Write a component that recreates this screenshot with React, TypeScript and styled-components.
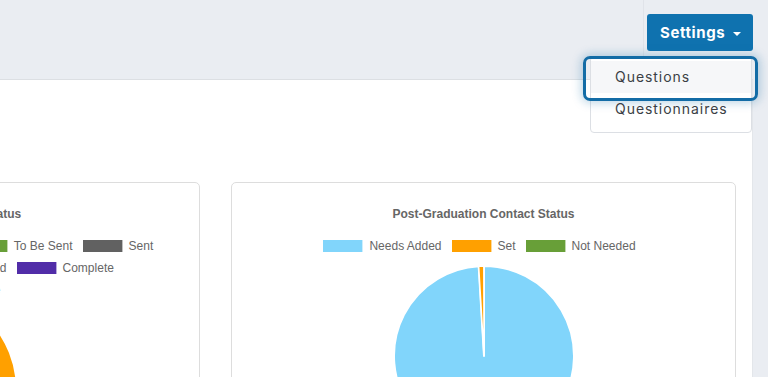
import React from "react";
import styled, { createGlobalStyle } from "styled-components";

const Global = createGlobalStyle`
  html, body { margin: 0; padding: 0; }
  body {
    background: #eaedf2;
    font-family: "Inter", "Open Sans", sans-serif;
    overflow: hidden;
    width: 768px;
    height: 377px;
  }
`;

const Page = styled.div`
  width: 768px;
  height: 377px;
  overflow: hidden;
  display: flex;
  flex-direction: column;
`;

const Header = styled.header`
  height: 79px;
  flex: none;
  display: flex;
  justify-content: flex-end;
  padding-right: 15px;
`;

const NavZone = styled.div`
  position: relative;
  border-left: 1px solid #e0e3e9;
  height: 76px;
  padding-left: 3px;
  padding-top: 14px;
  box-sizing: border-box;
`;

const SettingsButton = styled.button`
  height: 37px;
  width: 106px;
  border: none;
  border-radius: 3px;
  background: #0f72af;
  color: #fff;
  font-family: "Inter", sans-serif;
  font-weight: 700;
  font-size: 15px;
  letter-spacing: 0.6px;
  display: flex;
  align-items: center;
  padding: 0 12px 0 13px;
  gap: 8px;
  cursor: pointer;
`;

const Caret = styled.span`
  width: 0;
  height: 0;
  border-left: 4px solid transparent;
  border-right: 4px solid transparent;
  border-top: 4px solid #fff;
  margin-top: 2px;
`;

const Menu = styled.ul`
  position: absolute;
  top: 56px;
  right: 1px;
  width: 162px;
  box-sizing: border-box;
  margin: 0;
  padding: 4px 0 7px;
  list-style: none;
  background: #fff;
  border: 1px solid #dcdfe4;
  border-radius: 4px;
  z-index: 5;
`;

const MenuItem = styled.li<{ $focused?: boolean }>`
  position: relative;
  height: 32px;
  line-height: 32px;
  padding-left: 24px;
  font-family: "Inter", sans-serif;
  font-size: 14px;
  letter-spacing: 0.95px;
  color: #3b3f45;
  background: ${(p) => (p.$focused ? "#f6f7f9" : "transparent")};
  ${(p) =>
    p.$focused &&
    `
    &::after {
      content: "";
      position: absolute;
      top: -5px;
      bottom: -8px;
      left: -8px;
      right: -7px;
      border: 3px solid #136ca6;
      border-radius: 7px;
      box-shadow: 0 0 10px 2px rgba(19, 108, 166, 0.28);
      pointer-events: none;
    }
  `}
`;

const Panel = styled.main`
  flex: 1;
  background: #fff;
  border-top: 1px solid #dcdfe3;
  border-right: 1px solid #e3e6ea;
  width: 753px;
  box-sizing: border-box;
  padding: 102px 16px 0 16px;
  display: flex;
  gap: 31px;
`;

const Card = styled.section<{ $offset?: number }>`
  flex: none;
  width: 505px;
  height: 260px;
  box-sizing: border-box;
  border: 1px solid #dddddd;
  border-radius: 5px;
  margin-left: ${(p) => (p.$offset ? `${p.$offset}px` : "0")};
  padding-top: 24px;
  overflow: hidden;
  font-family: "Liberation Sans", Arial, sans-serif;
`;

const ChartTitle = styled.div`
  text-align: center;
  font-weight: 700;
  font-size: 12px;
  line-height: 14px;
  color: #666;
`;

const Legend = styled.div`
  margin-top: 19px;
  display: flex;
  flex-direction: column;
  gap: 10px;
`;

const LegendRow = styled.div`
  display: flex;
  justify-content: center;
  gap: 10px;
  height: 12px;
  padding-right: 8px;
`;

const LegendItem = styled.div`
  display: flex;
  align-items: center;
  gap: 6px;
  font-size: 12px;
  line-height: 12px;
  color: #666;
  white-space: nowrap;
`;

const Swatch = styled.span<{ $c: string }>`
  width: 40px;
  height: 12px;
  box-sizing: border-box;
  background: ${(p) => p.$c};
  border-right: 1px solid rgba(255, 255, 255, 0.6);
`;

const PieSvg = styled.svg`
  display: block;
`;

const C = {
  blue: "#81d5fb",
  orange: "#ffa000",
  green: "#689f38",
  gray: "#616161",
  purple: "#512da8",
  light: "#e0e0e0",
};

function arc(cx: number, cy: number, r: number, a0: number, a1: number) {
  const rad = (a: number) => (a * Math.PI) / 180;
  const x0 = cx + r * Math.sin(rad(a0));
  const y0 = cy - r * Math.cos(rad(a0));
  const x1 = cx + r * Math.sin(rad(a1));
  const y1 = cy - r * Math.cos(rad(a1));
  const large = a1 - a0 > 180 ? 1 : 0;
  return `M${cx} ${cy} L${x0} ${y0} A${r} ${r} 0 ${large} 1 ${x1} ${y1} Z`;
}

type Item = { label: string; color: string };

const leftRows: Item[][] = [
  [
    { label: "Not Started", color: C.blue },
    { label: "In Progress", color: C.orange },
    { label: "To Be Sent", color: C.green },
    { label: "Sent", color: C.gray },
  ],
  [
    { label: "Link Opened", color: C.blue },
    { label: "Reassigned", color: C.orange },
    { label: "Complete", color: C.purple },
  ],
  [{ label: "Unreachable", color: C.light }],
];

const rightRow: Item[] = [
  { label: "Needs Added", color: C.blue },
  { label: "Set", color: C.orange },
  { label: "Not Needed", color: C.green },
];

export default function App() {
  return (
    <Page>
      <Global />
      <Header>
        <NavZone>
          <SettingsButton>
            Settings
            <Caret />
          </SettingsButton>
          <Menu>
            <MenuItem $focused>Questions</MenuItem>
            <MenuItem>Questionnaires</MenuItem>
          </Menu>
        </NavZone>
      </Header>
      <Panel>
        <Card $offset={-321}>
          <ChartTitle>Graduation Survey Status</ChartTitle>
          <Legend>
            {leftRows.map((row, i) => (
              <LegendRow key={i}>
                {row.map((it) => (
                  <LegendItem key={it.label}>
                    <Swatch $c={it.color} />
                    {it.label}
                  </LegendItem>
                ))}
              </LegendRow>
            ))}
          </Legend>
          <PieSvg width="503" height="120" viewBox="0 0 503 120">
            <circle cx="219" cy="94" r="102" fill={C.orange} stroke="#fff" strokeWidth="2" />
          </PieSvg>
        </Card>
        <Card>
          <ChartTitle>Post-Graduation Contact Status</ChartTitle>
          <Legend>
            <LegendRow>
              {rightRow.map((it) => (
                <LegendItem key={it.label}>
                  <Swatch $c={it.color} />
                  {it.label}
                </LegendItem>
              ))}
            </LegendRow>
          </Legend>
          <PieSvg width="503" height="140" viewBox="0 0 503 140">
            <path d={arc(252, 104, 90, 0, 356.6)} fill={C.blue} stroke="#fff" strokeWidth="2" strokeLinejoin="round" />
            <path d={arc(252, 104, 90, 356.6, 359.9)} fill={C.orange} stroke="#fff" strokeWidth="1.5" />
          </PieSvg>
        </Card>
      </Panel>
    </Page>
  );
}
